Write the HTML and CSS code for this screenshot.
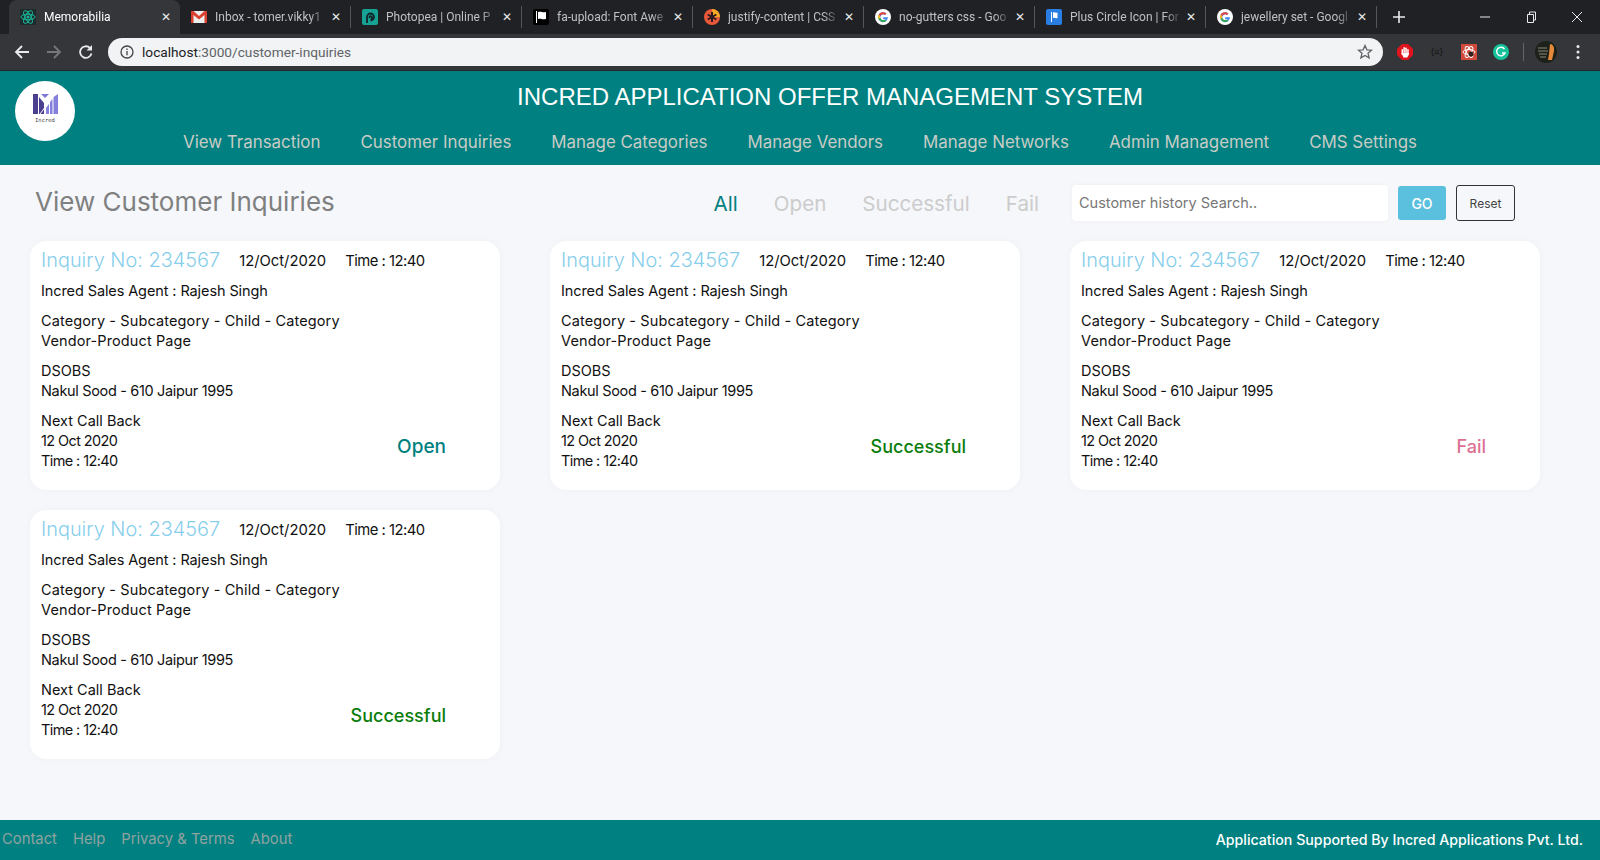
FILE: index.html
```html
<!DOCTYPE html>
<html lang="en">
<head>
    <meta charset="UTF-8">
    <meta name="viewport" content="width=device-width, initial-scale=1.0">
    <title>Memorabilia</title>
    <link rel="stylesheet" href="styles.css">
</head>
<body>
    <!-- Browser chrome -->
    <div class="tabstrip">
        <div class="tab tab-active">
            <svg class="favicon" viewBox="0 0 16 16"><rect width="16" height="16" fill="#1f2a2c"/><g fill="none" stroke="#1bb597" stroke-width="1"><ellipse cx="8" cy="8" rx="7" ry="2.8"/><ellipse cx="8" cy="8" rx="7" ry="2.8" transform="rotate(60 8 8)"/><ellipse cx="8" cy="8" rx="7" ry="2.8" transform="rotate(120 8 8)"/></g><circle cx="8" cy="8" r="1.5" fill="#1bb597"/></svg>
            <span class="tab-title">Memorabilia</span>
            <span class="tab-close">✕</span>
        </div>
        <div class="tab">
            <svg class="favicon" viewBox="0 0 16 16"><rect y="2" width="16" height="12" fill="#eee"/><path d="M0 2h2.5L8 7l5.500-5H16v12h-2.500V6L8 10.500 2.500 6v8H0z" fill="#d8402f"/></svg>
            <span class="tab-title">Inbox - tomer.vikky1</span>
            <span class="tab-close">✕</span>
        </div>
        <div class="tab">
            <svg class="favicon" viewBox="0 0 16 16"><rect width="16" height="16" rx="2" fill="#17a394"/><path d="M5 14V8a3.500 3.500 0 1 1 3.500 3.500M7.500 9a1.300 1.300 0 1 1 1 .8" fill="none" stroke="#10242a" stroke-width="1.800"/></svg>
            <span class="tab-title">Photopea | Online P</span>
            <span class="tab-close">✕</span>
        </div>
        <div class="tab">
            <svg class="favicon" viewBox="0 0 16 16"><rect width="16" height="16" rx="2" fill="#000"/><path d="M3 2h1v12H3zM5 3c3-1 4 1 8 0v7c-4 1-5-1-8 0z" fill="#fff"/></svg>
            <span class="tab-title">fa-upload: Font Awe</span>
            <span class="tab-close">✕</span>
        </div>
        <div class="tab">
            <svg class="favicon" viewBox="0 0 16 16"><circle cx="8" cy="8" r="8" fill="#e8583a"/><path d="M8 0a8 8 0 0 1 8 8H8z" fill="#f7a825"/><path d="M8 3v10M3.700 5.500l8.600 5M3.700 10.500l8.600-5" stroke="#2a1a20" stroke-width="2"/></svg>
            <span class="tab-title">justify-content | CSS</span>
            <span class="tab-close">✕</span>
        </div>
        <div class="tab">
            <svg class="favicon" viewBox="0 0 16 16"><circle cx="8" cy="8" r="8" fill="#fff"/><path d="M13 8.300H8.200v1.900h2.700A3 3 0 1 1 10 5.900l1.400-1.400A5 5 0 1 0 13 8.300z" fill="#4285f4"/><path d="M3.600 5.700A5 5 0 0 1 11.400 4.500L10 5.900a3 3 0 0 0-4.700 1z" fill="#ea4335"/><path d="M3.600 5.700l1.700 1.200a3 3 0 0 0 0 2.200l-1.700 1.200a5 5 0 0 1 0-4.600z" fill="#fbbc05"/><path d="M3.600 10.300l1.700-1.200a3 3 0 0 0 4.600 1.400l1.500 1.200a5 5 0 0 1-7.800-1.400z" fill="#34a853"/></svg>
            <span class="tab-title">no-gutters css - Goo</span>
            <span class="tab-close">✕</span>
        </div>
        <div class="tab">
            <svg class="favicon" viewBox="0 0 16 16"><rect width="16" height="16" rx="2" fill="#2a7de1"/><path d="M5 3h1v10H5zM7 3.500c2-.5 2.500.7 4.500 0v5.500c-2 .7-2.500-.5-4.500 0z" fill="#fff"/></svg>
            <span class="tab-title">Plus Circle Icon | For</span>
            <span class="tab-close">✕</span>
        </div>
        <div class="tab">
            <svg class="favicon" viewBox="0 0 16 16"><circle cx="8" cy="8" r="8" fill="#fff"/><path d="M13 8.300H8.200v1.900h2.700A3 3 0 1 1 10 5.900l1.400-1.400A5 5 0 1 0 13 8.300z" fill="#4285f4"/><path d="M3.600 5.700A5 5 0 0 1 11.400 4.500L10 5.900a3 3 0 0 0-4.700 1z" fill="#ea4335"/><path d="M3.600 5.700l1.700 1.200a3 3 0 0 0 0 2.200l-1.700 1.200a5 5 0 0 1 0-4.600z" fill="#fbbc05"/><path d="M3.600 10.300l1.700-1.200a3 3 0 0 0 4.600 1.400l1.500 1.200a5 5 0 0 1-7.800-1.400z" fill="#34a853"/></svg>
            <span class="tab-title">jewellery set - Googl</span>
            <span class="tab-close">✕</span>
        </div>
        <svg class="new-tab" viewBox="0 0 12 12"><path d="M6 0v12M0 6h12" stroke="#e8eaed" stroke-width="1.600"/></svg>
        <div class="window-controls">
            <svg viewBox="0 0 12 12"><path d="M1 6h10" stroke="#e8eaed"/></svg>
            <svg viewBox="0 0 12 12"><path d="M2.500 3.500h6v8h-6zM4.500 3.500V1h6v8h-2" fill="none" stroke="#e8eaed"/></svg>
            <svg viewBox="0 0 12 12"><path d="M1 1l10 10M11 1L1 11" stroke="#e8eaed"/></svg>
        </div>
    </div>
    <div class="toolbar">
        <svg class="nav-icon" viewBox="0 0 16 16"><path d="M15 8H2M8 2L2 8l6 6" fill="none" stroke="#e8eaed" stroke-width="1.800"/></svg>
        <svg class="nav-icon" viewBox="0 0 16 16"><path d="M1 8h13M8 2l6 6-6 6" fill="none" stroke="#75777a" stroke-width="1.800"/></svg>
        <svg class="nav-icon" viewBox="0 0 16 16"><path d="M13.500 9.500A5.800 5.800 0 1 1 12 4" fill="none" stroke="#e8eaed" stroke-width="1.800"/><path d="M14 1v5.500H8.500z" fill="#e8eaed"/></svg>
        <div class="omnibox">
            <svg class="info-icon" viewBox="0 0 14 14"><circle cx="7" cy="7" r="6" fill="none" stroke="#444" stroke-width="1.300"/><path d="M7 6v4.200M7 3.600v1.300" stroke="#444" stroke-width="1.300"/></svg>
            <span class="url"><span class="url-host">localhost</span>:3000/customer-inquiries</span>
            <svg class="star-icon" viewBox="0 0 16 16"><path d="M8 1.500l1.900 4.300 4.600.4-3.500 3 1.100 4.600L8 11.400l-4.100 2.400L5 9.200l-3.500-3 4.600-.4z" fill="none" stroke="#5f6368" stroke-width="1.300"/></svg>
        </div>
        <div class="extensions">
            <svg class="ext" viewBox="0 0 16 16"><path d="M5 0h6l5 5v6l-5 5H5l-5-5V5z" fill="#e0141c"/><g fill="#fff"><rect x="4.500" y="5" width="1.500" height="6" rx=".7"/><rect x="6.400" y="3" width="1.500" height="6" rx=".7"/><rect x="8.300" y="3.500" width="1.500" height="6" rx=".7"/><rect x="10.200" y="5" width="1.500" height="6" rx=".7"/><path d="M4.500 9h7.200v2l-1.500 2.500H6.500z"/></g></svg>
            <span class="ext ext-braces">{≡}</span>
            <svg class="ext" viewBox="0 0 16 16"><rect width="16" height="16" fill="#d24a3c"/><g fill="none" stroke="#fff"><ellipse cx="8" cy="8" rx="6" ry="2.500"/><ellipse cx="8" cy="8" rx="6" ry="2.500" transform="rotate(60 8 8)"/><ellipse cx="8" cy="8" rx="6" ry="2.500" transform="rotate(120 8 8)"/></g><circle cx="10" cy="10" r="2.500" fill="#30201e"/></svg>
            <svg class="ext" viewBox="0 0 16 16"><circle cx="8" cy="8" r="8" fill="#15c39a"/><path d="M11.500 5A4.300 4.300 0 1 0 12 9H9" fill="none" stroke="#fff" stroke-width="1.500"/></svg>
            <span class="ext-divider"></span>
            <svg class="avatar" viewBox="0 0 22 22"><circle cx="11" cy="11" r="11" fill="#1c2219"/><path d="M15 3c3 0 4.500 3 4 7l-2 9h-4l1-6z" fill="#e5893a"/><path d="M3 7h9M3 10h10M4 13h8M5 16h6" stroke="#8a8a7a"/></svg>
            <svg class="menu-dots" viewBox="0 0 4 16"><circle cx="2" cy="2.500" r="1.500" fill="#e8eaed"/><circle cx="2" cy="8" r="1.500" fill="#e8eaed"/><circle cx="2" cy="13.500" r="1.500" fill="#e8eaed"/></svg>
        </div>
    </div>

    <!-- App header -->
    <header class="app-header">
        <div class="logo">
            <svg viewBox="0 0 25 20" class="logo-mark" preserveAspectRatio="none"><path d="M0 0h5v20H0zM6 3l5 6v11H6z" fill="#4b3f8f"/><path d="M8 0h8l-4 4z" fill="#7d78d6"/><path d="M13 20v-6l3-4v10zM17 20V8l2.500-3v15zM20.500 20V3L25 0v20z" fill="#8580dc"/><path d="M7 20L19 4" stroke="#fff" stroke-width="1"/></svg>
            <span class="logo-text">Incred</span>
        </div>
        <div class="header-main">
            <h1 class="app-title">INCRED APPLICATION OFFER MANAGEMENT SYSTEM</h1>
            <nav class="main-nav">
                <a href="#">View Transaction</a>
                <a href="#">Customer Inquiries</a>
                <a href="#">Manage Categories</a>
                <a href="#">Manage Vendors</a>
                <a href="#">Manage Networks</a>
                <a href="#">Admin Management</a>
                <a href="#">CMS Settings</a>
            </nav>
        </div>
    </header>

    <main class="content">
        <div class="page-head">
            <h2 class="page-title">View Customer Inquiries</h2>
            <div class="filters">
                <a href="#" class="filter filter-active">All</a>
                <a href="#" class="filter">Open</a>
                <a href="#" class="filter">Successful</a>
                <a href="#" class="filter">Fail</a>
            </div>
            <input type="text" class="search-input" placeholder="Customer history Search..">
            <button class="btn-go">GO</button>
            <button class="btn-reset">Reset</button>
        </div>

        <section class="inquiry-grid">
            <article class="inquiry-card">
                <div class="card-top">
                    <span class="inquiry-no">Inquiry No: 234567</span>
                    <span class="inquiry-date">12/Oct/2020</span>
                    <span class="inquiry-date num">Time : 12:40</span>
                </div>
                <p class="tight">Incred Sales Agent : Rajesh Singh</p>
                <p><span class="wide">Category - Subcategory - Child - Category</span><br><span class="wide">Vendor-Product Page</span></p>
                <p>DSOBS<br><span class="num-loose">Nakul Sood - 610 Jaipur 1995</span></p>
                <div class="card-bottom">
                    <p>Next Call Back<br><span class="num">12 Oct 2020</span><br><span class="num">Time : 12:40</span></p>
                    <span class="status status-open">Open</span>
                </div>
            </article>
            <article class="inquiry-card">
                <div class="card-top">
                    <span class="inquiry-no">Inquiry No: 234567</span>
                    <span class="inquiry-date">12/Oct/2020</span>
                    <span class="inquiry-date num">Time : 12:40</span>
                </div>
                <p class="tight">Incred Sales Agent : Rajesh Singh</p>
                <p><span class="wide">Category - Subcategory - Child - Category</span><br><span class="wide">Vendor-Product Page</span></p>
                <p>DSOBS<br><span class="num-loose">Nakul Sood - 610 Jaipur 1995</span></p>
                <div class="card-bottom">
                    <p>Next Call Back<br><span class="num">12 Oct 2020</span><br><span class="num">Time : 12:40</span></p>
                    <span class="status status-success">Successful</span>
                </div>
            </article>
            <article class="inquiry-card">
                <div class="card-top">
                    <span class="inquiry-no">Inquiry No: 234567</span>
                    <span class="inquiry-date">12/Oct/2020</span>
                    <span class="inquiry-date num">Time : 12:40</span>
                </div>
                <p class="tight">Incred Sales Agent : Rajesh Singh</p>
                <p><span class="wide">Category - Subcategory - Child - Category</span><br><span class="wide">Vendor-Product Page</span></p>
                <p>DSOBS<br><span class="num-loose">Nakul Sood - 610 Jaipur 1995</span></p>
                <div class="card-bottom">
                    <p>Next Call Back<br><span class="num">12 Oct 2020</span><br><span class="num">Time : 12:40</span></p>
                    <span class="status status-fail">Fail</span>
                </div>
            </article>
            <article class="inquiry-card">
                <div class="card-top">
                    <span class="inquiry-no">Inquiry No: 234567</span>
                    <span class="inquiry-date">12/Oct/2020</span>
                    <span class="inquiry-date num">Time : 12:40</span>
                </div>
                <p class="tight">Incred Sales Agent : Rajesh Singh</p>
                <p><span class="wide">Category - Subcategory - Child - Category</span><br><span class="wide">Vendor-Product Page</span></p>
                <p>DSOBS<br><span class="num-loose">Nakul Sood - 610 Jaipur 1995</span></p>
                <div class="card-bottom">
                    <p>Next Call Back<br><span class="num">12 Oct 2020</span><br><span class="num">Time : 12:40</span></p>
                    <span class="status status-success">Successful</span>
                </div>
            </article>
        </section>
    </main>

    <footer class="app-footer">
        <div class="footer-links">
            <a href="#">Contact</a>
            <a href="#">Help</a>
            <a href="#">Privacy &amp; Terms</a>
            <a href="#">About</a>
        </div>
        <span class="footer-note">Application Supported By Incred Applications Pvt. Ltd.</span>
    </footer>
</body>
</html>
```

FILE: styles.css
```css
* {
    box-sizing: border-box;
}

html, body {
    height: 100%;
}

body {
    margin: 0;
    height: 860px;
    overflow: hidden;
    display: flex;
    flex-direction: column;
    font-family: Inter, "Noto Sans", sans-serif;
    background-color: #f5f7fb;
    color: #111;
}

a {
    text-decoration: none;
}

/* Browser chrome */
.tabstrip {
    height: 34px;
    padding-left: 9px;
    display: flex;
    align-items: center;
    background-color: #202124;
    font-family: Roboto, sans-serif;
    font-size: 12px;
}

.tab {
    width: 171px;
    height: 22px;
    padding: 0 9px 0 11px;
    display: flex;
    align-items: center;
    color: #bdc1c6;
    border-right: 1px solid #54565a;
}

.tab-active {
    height: 34px;
    padding-left: 11px;
    border-right: none;
    border-radius: 8px 8px 0 0;
    background-color: #35363a;
    color: #fff;
}

.favicon {
    width: 16px;
    height: 16px;
    flex-shrink: 0;
}

.tab-title {
    flex: 1;
    margin-left: 8px;
    overflow: hidden;
    white-space: nowrap;
    -webkit-mask-image: linear-gradient(to right, #000 85%, transparent);
    mask-image: linear-gradient(to right, #000 85%, transparent);
}

.tab-close {
    margin-left: 4px;
    font-size: 12px;
    color: #e8eaed;
}

.new-tab {
    width: 12px;
    height: 12px;
    margin-left: 16px;
}

.window-controls {
    margin-left: auto;
    display: flex;
    gap: 34px;
    padding-right: 17px;
}

.window-controls svg {
    width: 12px;
    height: 12px;
}

.toolbar {
    height: 37px;
    padding-left: 14px;
    display: flex;
    align-items: center;
    background-color: #35363a;
    border-bottom: 1px solid #26272a;
}

.nav-icon {
    width: 16px;
    height: 16px;
    margin-right: 16px;
}

.omnibox {
    width: 1275px;
    height: 28px;
    margin-left: -2px;
    padding: 0 10px 0 12px;
    display: flex;
    align-items: center;
    border-radius: 14px;
    background-color: #f1f3f4;
    font-family: Roboto, sans-serif;
    font-size: 13.7px;
    color: #5f6368;
}

.info-icon {
    width: 14px;
    height: 14px;
    margin-right: 8px;
}

.url-host {
    color: #202124;
}

.star-icon {
    width: 16px;
    height: 16px;
    margin-left: auto;
}

.extensions {
    flex: 1;
    padding: 0 20px 0 14px;
    display: flex;
    align-items: center;
    gap: 16px;
}

.ext {
    width: 16px;
    height: 16px;
}

.ext-braces {
    font-size: 9px;
    line-height: 16px;
    color: #111;
    text-align: center;
    white-space: nowrap;
}

.ext-divider {
    width: 1px;
    height: 18px;
    margin-left: -2px;
    background-color: #666;
}

.avatar {
    width: 22px;
    height: 22px;
    margin-left: -5px;
}

.menu-dots {
    width: 4px;
    height: 16px;
    margin-left: auto;
}

/* App header */
.app-header {
    height: 94px;
    padding: 0 15px;
    display: flex;
    background-color: #008080;
}

.logo {
    width: 60px;
    height: 60px;
    margin-top: 10px;
    display: flex;
    flex-direction: column;
    align-items: center;
    padding-top: 13px;
    border-radius: 50%;
    background-color: #fff;
}

.logo-mark {
    width: 25px;
    height: 20px;
    flex-shrink: 0;
}

.logo-text {
    margin-top: 3px;
    font-family: "DejaVu Sans Mono", monospace;
    font-size: 5.5px;
    line-height: 7px;
    color: #444;
}

.header-main {
    flex: 1;
}

.app-title {
    margin: 11px 0 0;
    font-family: "Liberation Sans", Arial, sans-serif;
    font-size: 24px;
    font-weight: 400;
    line-height: 30px;
    text-align: center;
    color: #fff;
}

.main-nav {
    margin-top: 18px;
    padding-left: 108px;
    display: flex;
    gap: 40px;
    font-size: 16.9px;
    line-height: 24px;
}

.main-nav a {
    color: #c8ccc6;
}

/* Page head */
.content {
    flex: 1;
    padding: 0 30px;
}

.page-head {
    height: 76px;
    display: flex;
    align-items: center;
}

.page-title {
    margin: 0 0 3px 5px;
    font-size: 26px;
    font-weight: 400;
    color: #808080;
}

.filters {
    margin-left: auto;
    display: flex;
    gap: 36px;
    margin-top: 1px;
    font-size: 20.6px;
}

.filter {
    color: #ccc;
}

.filter-active {
    color: #008080;
}

.search-input {
    width: 316px;
    height: 36px;
    margin-left: 33px;
    padding: 0 7px 2px;
    border: none;
    border-radius: 4px;
    background-color: #fff;
    box-shadow: 0 0 4px rgba(0, 0, 0, 0.04);
    font-family: inherit;
    font-size: 14.5px;
}

.search-input::placeholder {
    color: #777;
}

.btn-go {
    width: 48px;
    height: 34px;
    margin-left: 10px;
    padding: 0;
    border: none;
    border-radius: 3px;
    background-color: #5bc0de;
    color: #fff;
    font-family: inherit;
    font-size: 14px;
    font-weight: 500;
}

.btn-reset {
    width: 59px;
    height: 36px;
    margin: 0 55px 0 10px;
    padding: 0;
    border: 1px solid #333;
    border-radius: 3px;
    background-color: transparent;
    color: #444;
    font-family: inherit;
    font-size: 12px;
}

/* Cards */
.inquiry-grid {
    display: grid;
    grid-template-columns: repeat(3, 470px);
    column-gap: 50px;
    row-gap: 20px;
}

.inquiry-card {
    height: 249px;
    padding: 4px 11px 0;
    border-radius: 16px;
    background-color: #fff;
    box-shadow: 0 0 8px rgba(0, 0, 0, 0.03);
    font-size: 14.5px;
    line-height: 20px;
}

.inquiry-card p {
    margin: 0 0 10px;
}

.card-top {
    height: 30px;
    margin-bottom: 6px;
    display: flex;
    align-items: center;
    gap: 19px;
}

.inquiry-no {
    margin-top: -1px;
    font-size: 19.9px;
    line-height: 30px;
    font-weight: 300;
    color: #87ceeb;
}

.inquiry-date {
    margin-top: 2px;
    font-size: 14.8px;
}

.num {
    letter-spacing: -0.6px;
}

.inquiry-date.num {
    letter-spacing: -0.5px;
}

.num-loose {
    letter-spacing: -0.33px;
}

.wide {
    letter-spacing: 0.12px;
}

.tight {
    letter-spacing: -0.1px;
}

.card-bottom {
    display: flex;
    justify-content: space-between;
    align-items: center;
}

.status {
    padding: 2px 43px 0 0;
    font-size: 18px;
    font-weight: 500;
}

.status-open {
    font-size: 19px;
    color: #008080;
}

.status-success {
    color: #0b7d0b;
}

.status-fail {
    color: #db7093;
}

/* Footer */
.app-footer {
    height: 40px;
    padding: 0 17px 2px 2px;
    display: flex;
    align-items: center;
    justify-content: space-between;
    background-color: #008080;
}

.footer-links {
    display: flex;
    gap: 16px;
    font-size: 14.8px;
}

.footer-links a {
    color: #8fa3a0;
}

.footer-note {
    font-size: 14.2px;
    font-weight: 500;
    color: #fff;
}
```
